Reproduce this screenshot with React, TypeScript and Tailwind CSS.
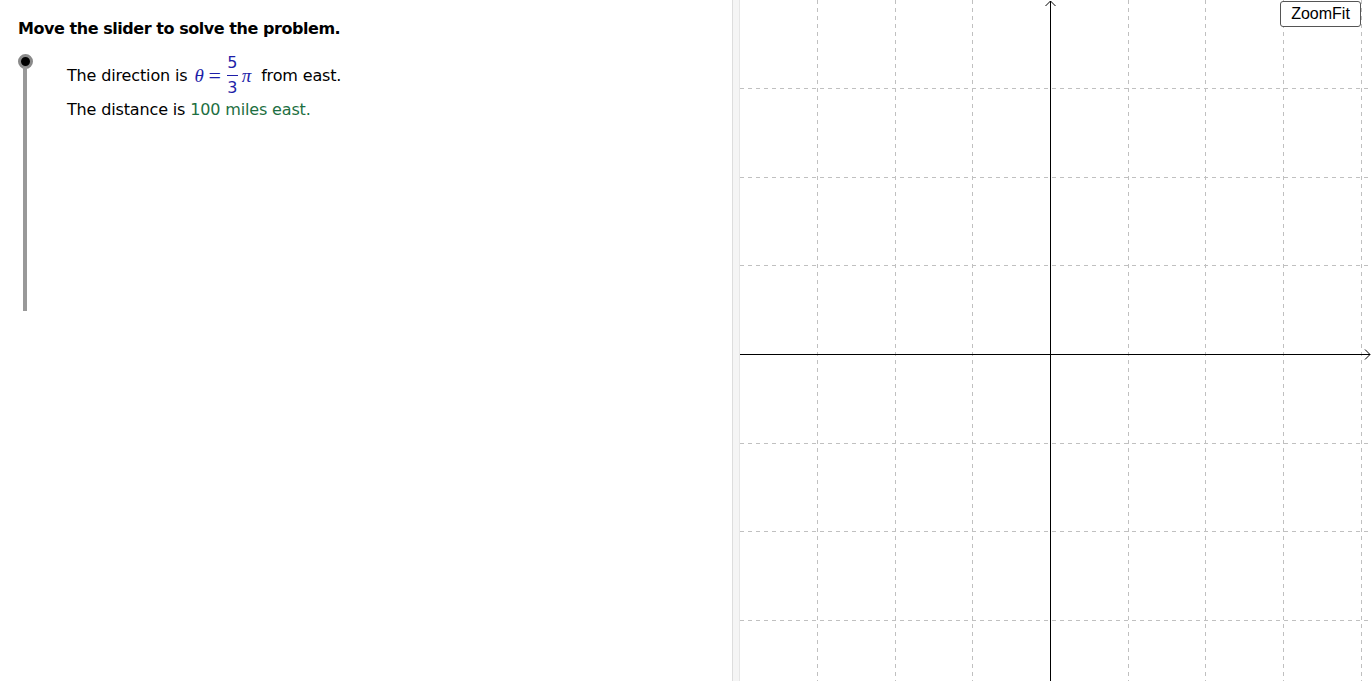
import React from "react";

const GRID_X = 77.7;
const GRID_Y = 88.6;
const ORIGIN_X = 310;
const ORIGIN_Y = 354;

const Graph = () => {
    const width = 632;
    const height = 681;
    const xs: number[] = [];
    for (let k = -4; k <= 4; k++) {
        const x = ORIGIN_X + k * GRID_X;
        if (x > 0 && x < width && k !== 0) xs.push(x);
    }
    const ys: number[] = [];
    for (let k = -4; k <= 4; k++) {
        const y = ORIGIN_Y + k * GRID_Y;
        if (y > 0 && y < height && k !== 0) ys.push(y);
    }
    return (
        <svg width={width} height={height} className="block">
            {xs.map(x => (
                <line key={"x" + x} x1={Math.round(x) + 0.5} y1={0} x2={Math.round(x) + 0.5} y2={height}
                      stroke="#c0c0c0" strokeWidth={1} strokeDasharray="4 4"/>
            ))}
            {ys.map(y => (
                <line key={"y" + y} x1={0} y1={Math.round(y) + 0.5} x2={width} y2={Math.round(y) + 0.5}
                      stroke="#c0c0c0" strokeWidth={1} strokeDasharray="4 4"/>
            ))}
            {/* axes */}
            <line x1={0} y1={ORIGIN_Y + 0.5} x2={width - 2} y2={ORIGIN_Y + 0.5} stroke="#000" strokeWidth={1}/>
            <line x1={ORIGIN_X + 0.5} y1={1} x2={ORIGIN_X + 0.5} y2={height} stroke="#000" strokeWidth={1}/>
            <polyline points={`${width - 7},${ORIGIN_Y - 4.5} ${width - 2},${ORIGIN_Y + 0.5} ${width - 7},${ORIGIN_Y + 5.5}`}
                      fill="none" stroke="#000" strokeWidth={1}/>
            <polyline points={`${ORIGIN_X - 4.5},${6} ${ORIGIN_X + 0.5},${1} ${ORIGIN_X + 5.5},${6}`}
                      fill="none" stroke="#000" strokeWidth={1}/>
        </svg>
    );
};

const serif = {fontFamily: '"Liberation Serif", serif'};

const App = () => {
    return (
        <div className="flex w-[1372px] h-[681px] overflow-hidden bg-white text-black"
             style={{fontFamily: '"DejaVu Sans", "Liberation Sans", sans-serif'}}>
            {/* left panel */}
            <div className="w-[732px] shrink-0 pl-[18px] pt-[18px]">
                <div className="text-[16px] font-bold leading-[22px] tracking-[-0.45px]">
                    Move the slider to solve the problem.
                </div>
                <div className="flex mt-[13px]">
                    <div className="w-[14px] flex flex-col items-center">
                        <div className="w-[15px] h-[15px] mt-[1px] rounded-full bg-black border-[3px] border-[#8a8a8a] shrink-0"/>
                        <div className="w-[4px] h-[244px] bg-[#999999] -mt-[2px]"/>
                    </div>
                    <div className="ml-[35px] text-[16px] leading-[20px] tracking-[-0.15px]">
                        <div className="flex items-center h-[45px]">
                            <span>The direction is&nbsp;</span>
                            <span className="text-[#1e1ea8] flex items-center ml-[2px]">
                                <span className="italic text-[19px]" style={serif}>θ</span>
                                <span className="text-[22px] mx-[5px]" style={serif}>=</span>
                                <span className="flex flex-col items-center leading-[20px] text-[16px] mx-[1px]">
                                    <span>5</span>
                                    <span className="w-[11px] h-px bg-[#1e1ea8] my-[2px]"/>
                                    <span>3</span>
                                </span>
                                <span className="italic text-[19px] ml-[3px]" style={serif}>π</span>
                            </span>
                            <span className="ml-[5px]">&nbsp;from east.</span>
                        </div>
                        <div className="mt-[2px]">
                            The distance is <span className="text-[#1d6f42]">100 miles east.</span>
                        </div>
                    </div>
                </div>
            </div>
            {/* divider */}
            <div className="w-[8px] shrink-0 bg-[#f5f5f5] border-l border-[#dddddd] border-r border-r-[#e6e6e6]"/>
            {/* graphics view */}
            <div className="relative flex-1">
                <Graph/>
                <button
                    className="absolute top-[1px] left-[540px] w-[81px] h-[26px] rounded-[3px] border border-[#555] bg-white text-[16px] leading-[22px]"
                    style={{fontFamily: '"Liberation Sans", Arial, sans-serif'}}>
                    ZoomFit
                </button>
            </div>
        </div>
    );
};

export default App;
